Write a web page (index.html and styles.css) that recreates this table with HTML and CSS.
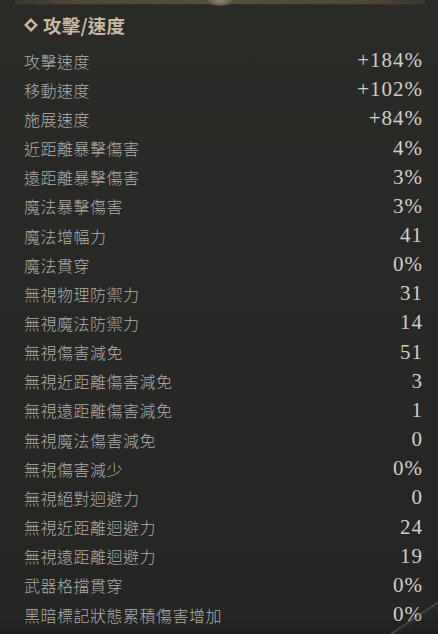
FILE: index.html
```html
<!DOCTYPE html>
<html lang="zh-Hant">
<head>
<meta charset="utf-8">
<link rel="stylesheet" href="styles.css">
</head>
<body>
<div class="panel">
  <div class="topbar"><span class="ornament"></span></div>
  <div class="title">
    <svg class="diamond" width="14" height="14" viewBox="0 0 14 14"><path d="M7 1.8 L12.2 7 L7 12.2 L1.8 7 Z" fill="none" stroke="#c9b8a2" stroke-width="2.4"/></svg>
    <span>攻擊/速度</span>
  </div>
  <ul class="stats">
    <li><span class="k">攻擊速度</span><span class="v">+184%</span></li>
    <li><span class="k">移動速度</span><span class="v">+102%</span></li>
    <li><span class="k">施展速度</span><span class="v">+84%</span></li>
    <li><span class="k">近距離暴擊傷害</span><span class="v">4%</span></li>
    <li><span class="k">遠距離暴擊傷害</span><span class="v">3%</span></li>
    <li><span class="k">魔法暴擊傷害</span><span class="v">3%</span></li>
    <li><span class="k">魔法增幅力</span><span class="v">41</span></li>
    <li><span class="k">魔法貫穿</span><span class="v">0%</span></li>
    <li><span class="k">無視物理防禦力</span><span class="v">31</span></li>
    <li><span class="k">無視魔法防禦力</span><span class="v">14</span></li>
    <li><span class="k">無視傷害減免</span><span class="v">51</span></li>
    <li><span class="k">無視近距離傷害減免</span><span class="v">3</span></li>
    <li><span class="k">無視遠距離傷害減免</span><span class="v">1</span></li>
    <li><span class="k">無視魔法傷害減免</span><span class="v">0</span></li>
    <li><span class="k">無視傷害減少</span><span class="v">0%</span></li>
    <li><span class="k">無視絕對迴避力</span><span class="v">0</span></li>
    <li><span class="k">無視近距離迴避力</span><span class="v">24</span></li>
    <li><span class="k">無視遠距離迴避力</span><span class="v">19</span></li>
    <li><span class="k">武器格擋貫穿</span><span class="v">0%</span></li>
    <li><span class="k">黑暗標記狀態累積傷害增加</span><span class="v">0%</span></li>
  </ul>
  <span class="corner"></span>
</div>
</body>
</html>
```
FILE: styles.css
```css
html, body {
  margin: 0;
  padding: 0;
  background: #272725;
  width: 438px;
  height: 634px;
  overflow: hidden;
}
.panel {
  position: relative;
  width: 438px;
  height: 634px;
  background: linear-gradient(180deg, #2a2a27 0%, #272725 60%, #252523 97%, #1f1f1d 100%);
  font-family: "Noto Sans CJK TC", "Noto Sans CJK SC", sans-serif;
}
.topbar {
  height: 4px;
  margin: 0 13px 0 15px;
  background: linear-gradient(90deg, #3a372e 0%, #4d4839 15%, #544e3e 50%, #4d4839 85%, #3a372e 100%);
  border-bottom: 1px solid #34322b;
  display: flex;
  justify-content: center;
}
.ornament {
  width: 24px;
  height: 6px;
  border-radius: 0 0 10px 10px;
  background: radial-gradient(ellipse at 50% 10%, #8c8471 0%, #6e6754 50%, rgba(80,74,60,0) 80%);
}
.title {
  display: flex;
  align-items: center;
  gap: 5px;
  margin: 7px 0 0 24px;
  height: 26px;
  color: #c8b7a1;
  font-size: 18.5px;
  font-weight: 700;
  letter-spacing: 0.2px;
}
.diamond {
  display: block;
  flex: none;
}
.stats {
  list-style: none;
  margin: 8px 0 0 0;
  padding: 0 15px 0 24px;
}
.stats li {
  display: flex;
  justify-content: space-between;
  align-items: center;
  height: 29.16px;
}
.k {
  color: #aeaeab;
  font-size: 16px;
  font-weight: 300;
  letter-spacing: 0.5px;
  white-space: nowrap;
}
.v {
  color: #cfcfcb;
  font-family: "Liberation Serif", serif;
  font-size: 21px;
  letter-spacing: 1px;
}
.corner {
  position: absolute;
  right: 0;
  bottom: 0;
  width: 48px;
  height: 32px;
  background: linear-gradient(146deg, rgba(0,0,0,0) 49%, rgba(120,120,115,0.55) 50%, rgba(60,60,58,0.3) 53%, rgba(0,0,0,0) 60%);
  pointer-events: none;
}
```
